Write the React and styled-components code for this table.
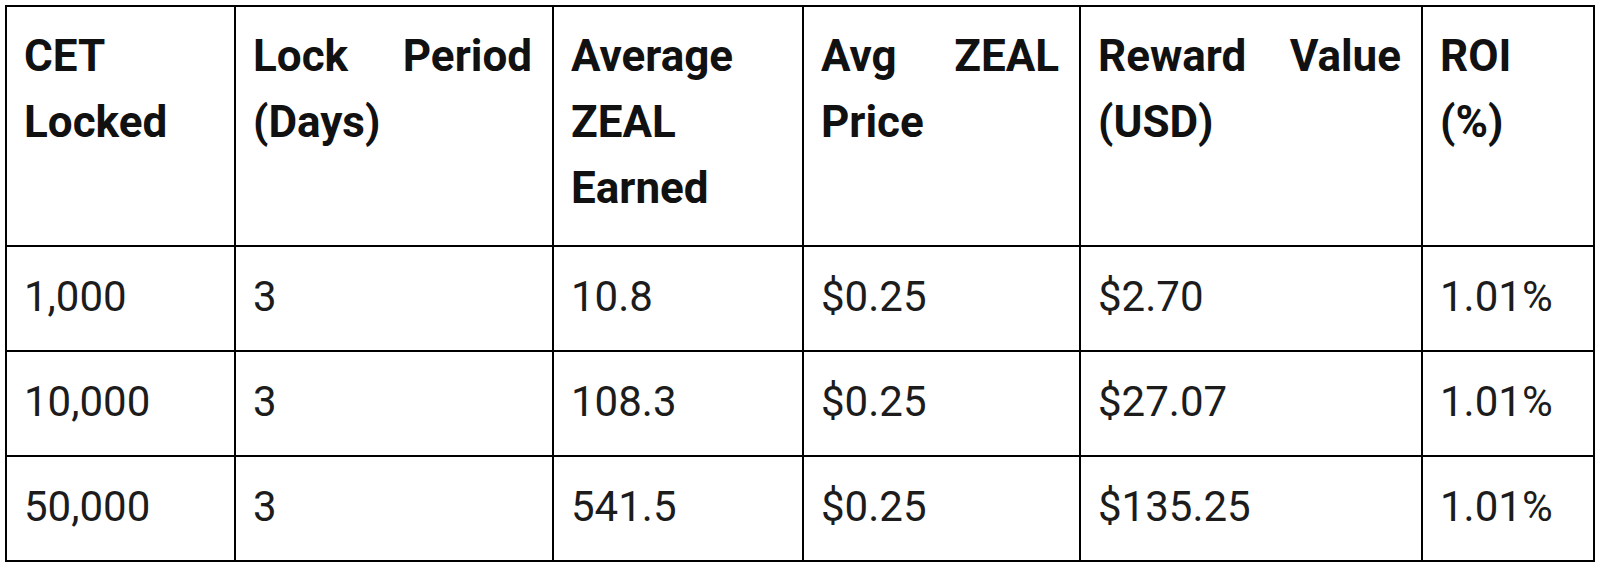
import React from 'react';
import styled, { createGlobalStyle } from 'styled-components';

const GlobalStyle = createGlobalStyle`
  body {
    margin: 0;
    background: #ffffff;
    font-family: Roboto, 'Liberation Sans', sans-serif;
  }
`;

const Wrapper = styled.div`
  padding: 5px;
`;

const Table = styled.table`
  width: 1590px;
  table-layout: fixed;
  border-collapse: separate;
  border-spacing: 0;
  border-top: 2px solid #000;
  border-left: 2px solid #000;
  color: #141414;
`;

const HeadCell = styled.th`
  padding: 16px 20px 24px 17px;
  border-right: 2px solid #000;
  border-bottom: 2px solid #000;
  font-size: 44px;
  line-height: 66px;
  font-weight: 700;
  text-align: justify;
  vertical-align: top;
  color: #111;
`;

const Cell = styled.td`
  padding: 18px 20px 22px 17px;
  border-right: 2px solid #000;
  border-bottom: 2px solid #000;
  font-size: 42px;
  line-height: 63px;
  font-weight: 400;
  vertical-align: top;
  color: #1c1c1c;
  white-space: nowrap;
`;

const columns = [
  { title: 'CET Locked', width: 229 },
  { title: 'Lock Period (Days)', width: 318 },
  { title: 'Average ZEAL Earned', width: 250 },
  { title: 'Avg ZEAL Price', width: 277 },
  { title: 'Reward Value (USD)', width: 342 },
  { title: 'ROI (%)', width: 172 },
];

const rows = [
  ['1,000', '3', '10.8', '$0.25', '$2.70', '1.01%'],
  ['10,000', '3', '108.3', '$0.25', '$27.07', '1.01%'],
  ['50,000', '3', '541.5', '$0.25', '$135.25', '1.01%'],
];

const App = () => (
  <Wrapper>
    <GlobalStyle />
    <Table>
      <colgroup>
        {columns.map(col => (
          <col key={col.title} style={{ width: col.width }} />
        ))}
      </colgroup>
      <thead>
        <tr>
          {columns.map(col => (
            <HeadCell key={col.title}>{col.title}</HeadCell>
          ))}
        </tr>
      </thead>
      <tbody>
        {rows.map(row => (
          <tr key={row[0]}>
            {row.map((value, i) => (
              <Cell key={i}>{value}</Cell>
            ))}
          </tr>
        ))}
      </tbody>
    </Table>
  </Wrapper>
);

export default App;
